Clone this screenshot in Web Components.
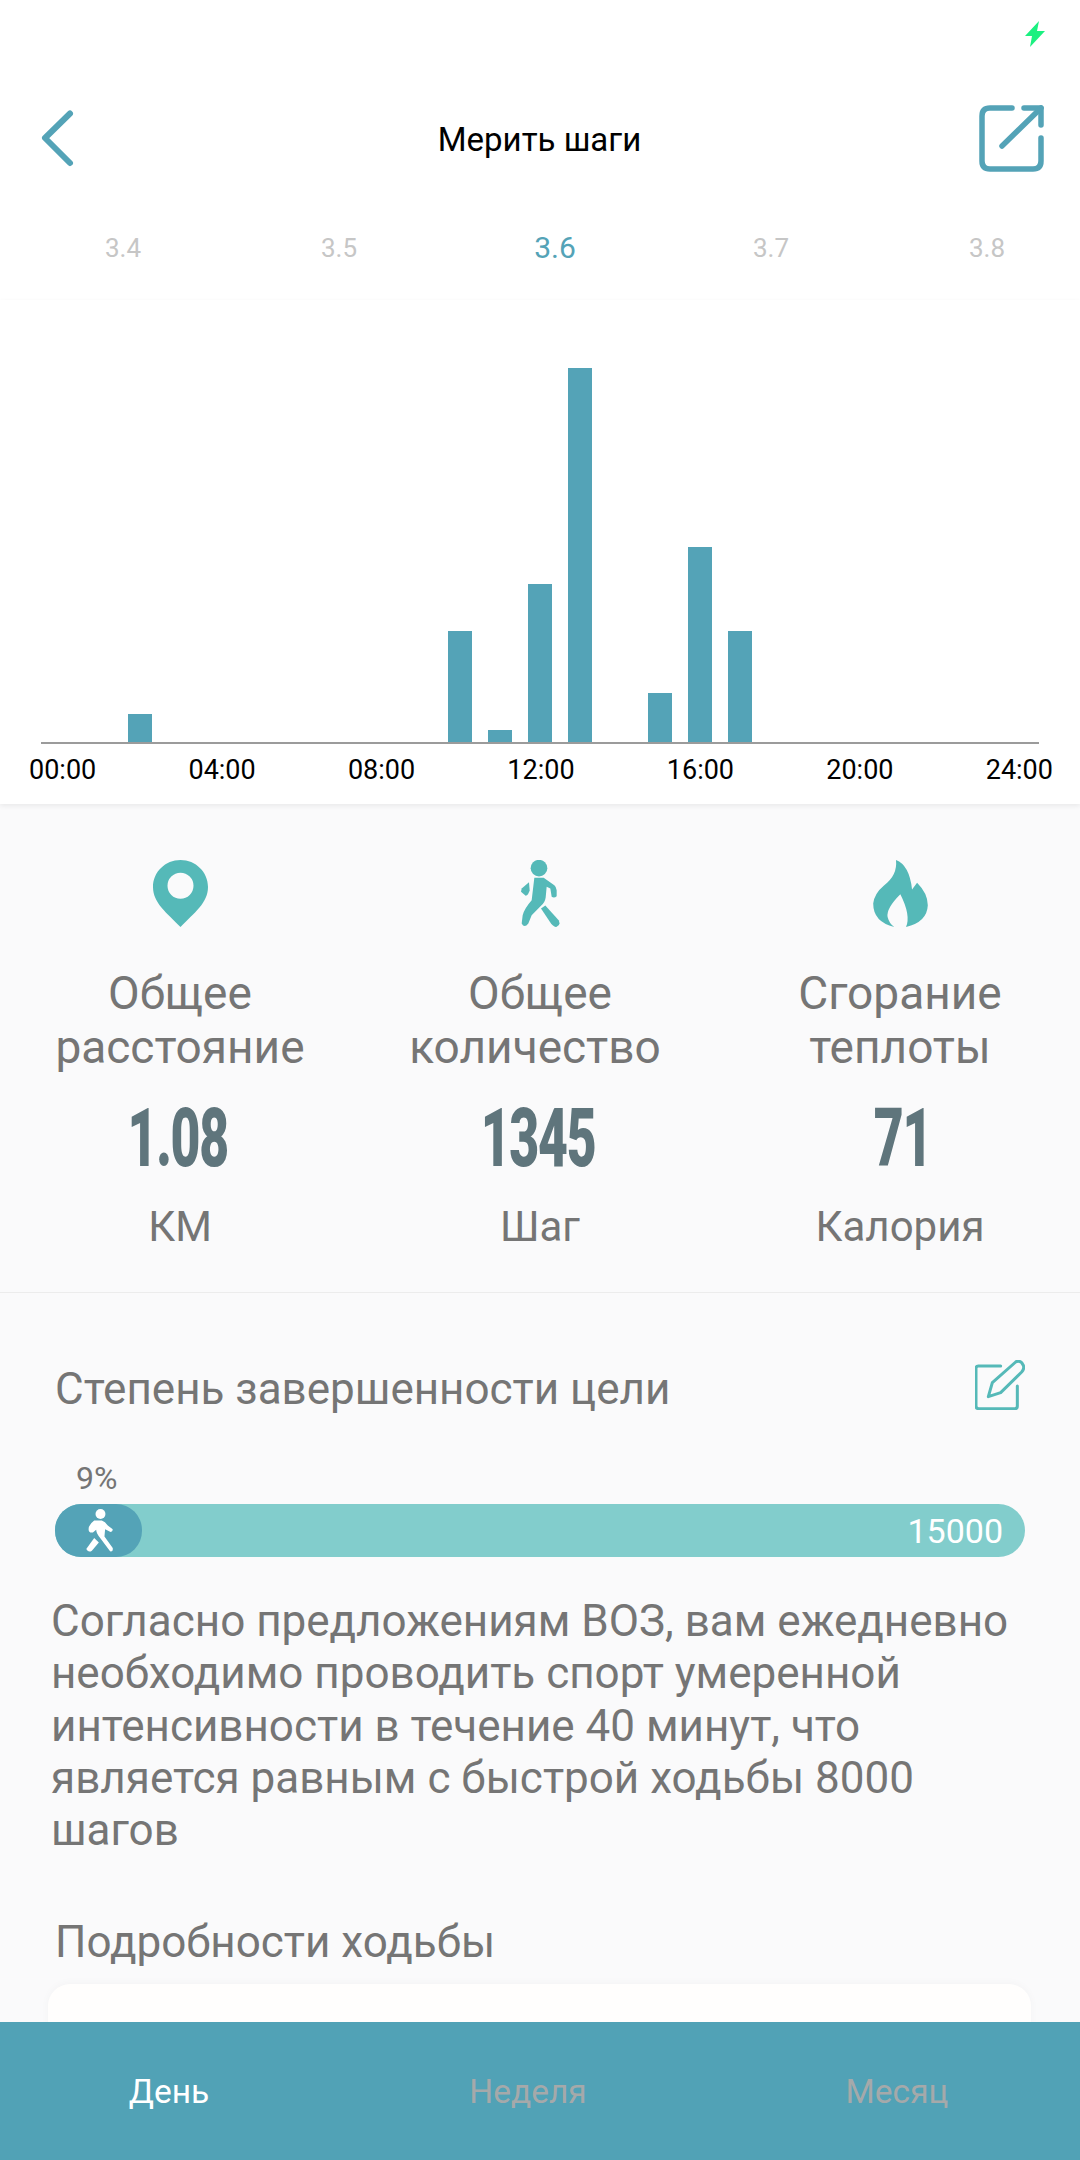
<!DOCTYPE html>
<html lang="ru">
<head>
<meta charset="utf-8">
<title>Мерить шаги</title>
<style>
  html, body { margin: 0; padding: 0; background: #fafafb; }
  body { font-family: Roboto, "Noto Sans", sans-serif; }
</style>
</head>
<body>
<step-screen>
  <app-header title="Мерить шаги"></app-header>
  <date-strip dates="3.4,3.5,3.6,3.7,3.8" active="3.6"></date-strip>
  <hour-chart></hour-chart>
  <stat-row>
    <stat-cell style="--nudge:-2px" icon="pin" value="1.08" unit="КМ">Общее<br>расстояние</stat-cell>
    <stat-cell style="--nudge:-2px" icon="walker" value="1345" unit="Шаг">Общее<br><span style="margin-left:-10px">количество</span></stat-cell>
    <stat-cell style="--nudge:3px" icon="flame" value="71" unit="Калория">Сгорание<br>теплоты</stat-cell>
  </stat-row>
  <goal-panel percent="9%" target="15000">
    Согласно предложениям ВОЗ, вам ежедневно необходимо проводить спорт умеренной интенсивности в течение 40 минут, что является равным с быстрой ходьбы 8000 шагов
  </goal-panel>
  <tab-bar slot="tabs"></tab-bar>
</step-screen>

<script>
/* Shared icon paths */
const ICONS = {
  pin: `<svg width="55" height="67" viewBox="0 0 55 67"><path fill="#55b9b8" fill-rule="evenodd" d="M27.5 0C12.3 0 0 12 0 27c0 16 14 26 27.5 40C41 53 55 43 55 27 55 12 42.7 0 27.5 0zm0 12.7a13 13 0 1 1 0 26 13 13 0 0 1 0-26z"/></svg>`,
  walker: `<svg width="39" height="67" viewBox="90 60 117 200" fill="#55b9b8"><circle cx="144" cy="84" r="25"/><path d="M130 113H158L190 135Q196 140 197 150V168Q190 175 182 170L178 145 167 140 164 172Q162 187 150 197L122 225 112 250Q100 265 92 250L95 225Q100 205 122 180Z"/><path d="M114 126L116 150Q112 165 104 167L90 155 92 145Z"/><path d="M150 205L163 196 203 240Q210 255 197 260 190 262 180 250Z"/></svg>`,
  flame: `<svg width="55" height="67" viewBox="97 60 163 200"><path fill="#55b9b8" d="M165 60Q205 75 213 148L228 128Q260 160 260 195 258 245 195 260 210 225 178 162 135 205 140 230 145 250 160 260 97 245 97 190 100 160 130 135 170 105 165 60Z"/></svg>`,
  edit: `<svg width="50" height="50" viewBox="75 62 150 150" fill="none" stroke="#55b9b8" stroke-width="9" stroke-linecap="round" stroke-linejoin="round"><path d="M152 80H85Q78 80 78 87V200Q78 208 86 208H195Q202 208 202 200V140"/><path d="M115 172L127 130 197 68Q205 62 215 70L220 78Q224 88 215 98L152 160Z"/></svg>`,
  walkerWhite: `<svg width="27" height="43" viewBox="148 57 80 130" fill="#fff"><circle cx="191" cy="72" r="15"/><path d="M172 92H195Q205 95 213 107L228 118Q228 128 220 126L205 118 203 140 228 175Q230 187 220 185L190 145Q178 130 178 120L168 128Q155 130 155 118 155 105 172 92Z"/><path d="M172 145L186 158 165 183Q155 190 148 178Z"/></svg>`,
};

class StepScreen extends HTMLElement {
  constructor() {
    super();
    this.attachShadow({ mode: 'open' }).innerHTML = `
      <style>
        :host { display: flex; flex-direction: column; width: 1080px; height: 2160px; overflow: hidden; background: #fafafb; }
        .scroll { flex: 1; min-height: 0; overflow: hidden; }
        .top { background: #fff; }
        .status { height: 80px; display: flex; justify-content: flex-end; padding: 21px 35px 0 0; box-sizing: border-box; }
      </style>
      <div class="scroll">
        <div class="top">
          <div class="status">
            <svg width="20" height="26" viewBox="0 0 20 26"><path fill="#1bf080" d="M14 0L0 15H7L5 26 20 10H12Z"/></svg>
          </div>
        </div>
        <slot></slot>
      </div>
      <slot name="tabs"></slot>`;
  }
}

class AppHeader extends HTMLElement {
  constructor() {
    super();
    this.attachShadow({ mode: 'open' }).innerHTML = `
      <style>
        :host { display: flex; align-items: center; justify-content: space-between; height: 116px; padding: 0 34px 0 40px; background: #fff; }
        h1 { margin: 2px 0 0; padding-left: 26px; font: 400 33px Roboto, sans-serif; color: #000; flex: 1; text-align: center; }
        svg { display: block; }
      </style>
      <svg width="36" height="60" viewBox="0 0 36 60" fill="none" stroke="#54a3b7" stroke-width="6" stroke-linecap="round" stroke-linejoin="round"><path d="M30 5.5L5 30 30 55"/></svg>
      <h1></h1>
      <svg width="69" height="71" viewBox="977 103 69 71" fill="none" stroke="#54a3b7" stroke-width="5.5" stroke-linecap="round" stroke-linejoin="round"><path d="M1012 108H990Q982 108 982 116V161Q982 169 990 169H1033Q1041 169 1041 161V138"/><path d="M1024 108H1041V125"/><path d="M1002 146L1041 108"/></svg>`;
    this.shadowRoot.querySelector('h1').textContent = this.getAttribute('title');
  }
}

class DateStrip extends HTMLElement {
  constructor() {
    super();
    const active = this.getAttribute('active');
    const items = this.getAttribute('dates').split(',')
      .map(d => `<span class="${d === active ? 'on' : ''}">${d}</span>`).join('');
    this.attachShadow({ mode: 'open' }).innerHTML = `
      <style>
        :host { display: grid; grid-template-columns: repeat(5, 216px); height: 104px; padding-left: 15px; background: #fff; overflow: hidden; }
        span { text-align: center; font-size: 26px; line-height: 104px; color: #c6c6c6; height: 104px; }
        .on { font-size: 30px; color: #54a3b7; }
      </style>${items}`;
  }
}

class HourChart extends HTMLElement {
  constructor() {
    super();
    const values = { 2: 28, 10: 111, 11: 12, 12: 158, 13: 374, 15: 49, 16: 195, 17: 111 };
    let cols = '';
    for (let h = 0; h < 25; h++) {
      cols += `<div class="col">${values[h] ? `<i style="height:${values[h]}px"></i>` : ''}</div>`;
    }
    const labels = ['00:00', '04:00', '08:00', '12:00', '16:00', '20:00', '24:00']
      .map(l => `<span>${l}</span>`).join('');
    this.attachShadow({ mode: 'open' }).innerHTML = `
      <style>
        :host { display: block; background: #fff; height: 504px; box-shadow: 0 2px 5px rgba(0,0,0,.07); position: relative; }
        .plot { display: flex; align-items: flex-end; height: 442px; width: 998px; margin-left: 41px; border-bottom: 2px solid #9b9b9b; overflow: hidden; }
        .col { width: 40px; flex: none; display: flex; justify-content: center; align-items: flex-end; position: relative; left: -1px; }
        i { display: block; width: 24px; background: #54a3b7; }
        .labels { display: flex; justify-content: space-between; padding: 0 27px 0 29px; margin-top: 8px; font-size: 27px; line-height: 36px; color: #000; }
      </style>
      <div class="plot">${cols}</div>
      <div class="labels">${labels}</div>`;
  }
}

class StatRow extends HTMLElement {
  constructor() {
    super();
    this.attachShadow({ mode: 'open' }).innerHTML = `
      <style>
        :host { display: grid; grid-template-columns: repeat(3, 1fr); height: 489px; box-sizing: border-box; padding-top: 56px; border-bottom: 1px solid #ececec; background: #fafafb; }
      </style>
      <slot></slot>`;
  }
}

class StatCell extends HTMLElement {
  constructor() {
    super();
    this.attachShadow({ mode: 'open' }).innerHTML = `
      <style>
        :host { display: flex; flex-direction: column; align-items: center; text-align: center; color: #757575; font-size: 46px; line-height: 54px; }
        .icon { height: 67px; margin-bottom: 39px; }
        svg { display: block; }
        .label { height: 108px; white-space: nowrap; }
        .num { margin-top: 24px; height: 80px; line-height: 80px; font-size: 82px; font-weight: 900; letter-spacing: -2px; color: #5f757c; transform: translateX(var(--nudge, 0)) scaleX(.63); }
        .unit { margin-top: 22px; font-size: 42px; }
      </style>
      <div class="icon">${ICONS[this.getAttribute('icon')]}</div>
      <div class="label"><slot></slot></div>
      <div class="num">${this.getAttribute('value')}</div>
      <div class="unit">${this.getAttribute('unit')}</div>`;
  }
}

class GoalPanel extends HTMLElement {
  constructor() {
    super();
    this.attachShadow({ mode: 'open' }).innerHTML = `
      <style>
        :host { display: block; color: #757575; font-size: 44px; line-height: 54px; padding-top: 69px; }
        .head { display: flex; justify-content: space-between; align-items: center; height: 54px; padding: 0 55px; }
        .head svg { display: block; margin-top: -8px; }
        .pct { margin: 42px 0 0 76px; font-size: 32px; line-height: 40px; }
        .bar { position: relative; display: flex; justify-content: flex-end; align-items: center; margin: 6px 55px 0; height: 53px; border-radius: 27px; background: #82cdcc; color: #fff; font-size: 34px; padding-right: 22px; }
        .fill { position: absolute; left: 0; top: 0; width: 87px; height: 53px; border-radius: 26px; background: #54a3b7; display: flex; align-items: center; justify-content: center; }
        .fill svg { display: block; margin-left: 2px; }
        p { margin: 38px 48px 0 51px; line-height: 52.3px; font-size: 44px; }
        h2 { margin: 59px 0 0 55px; font-weight: 400; font-size: 44px; line-height: 54px; }
        .card { margin: 15px 49px 0 48px; height: 200px; background: #fffefd; border-radius: 22px; box-shadow: 0 -1px 8px rgba(0,0,0,.03); }
      </style>
      <div class="head"><span>Степень завершенности цели</span>${ICONS.edit}</div>
      <div class="pct">${this.getAttribute('percent')}</div>
      <div class="bar"><div class="fill">${ICONS.walkerWhite}</div>${this.getAttribute('target')}</div>
      <p><slot></slot></p>
      <h2>Подробности ходьбы</h2>
      <div class="card"></div>`;
  }
}

class TabBar extends HTMLElement {
  constructor() {
    super();
    this.attachShadow({ mode: 'open' }).innerHTML = `
      <style>
        :host { display: grid; grid-template-columns: 338px 380px 358px; align-items: center; height: 138px; flex: none; background: #51a2b6; font-size: 33.5px; color: #a5a9aa; text-align: center; }
        .on { color: #fff; }
      </style>
      <span class="on">День</span><span>Неделя</span><span>Месяц</span>`;
  }
}

customElements.define('step-screen', StepScreen);
customElements.define('app-header', AppHeader);
customElements.define('date-strip', DateStrip);
customElements.define('hour-chart', HourChart);
customElements.define('stat-row', StatRow);
customElements.define('stat-cell', StatCell);
customElements.define('goal-panel', GoalPanel);
customElements.define('tab-bar', TabBar);
</script>
</body>
</html>
